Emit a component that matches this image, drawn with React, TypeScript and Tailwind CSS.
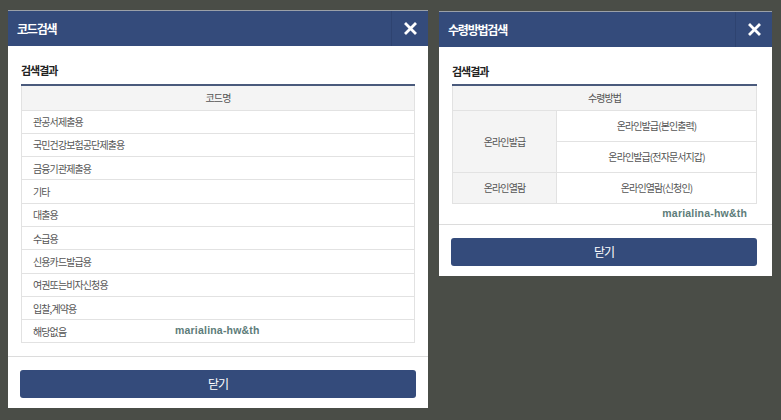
import React from "react";

const codes = [
  "관공서제출용",
  "국민건강보험공단제출용",
  "금융기관제출용",
  "기타",
  "대출용",
  "수급용",
  "신용카드발급용",
  "여권또는비자신청용",
  "입찰,계약용",
  "해당없음",
];

const kr = "font-['Noto_Sans_CJK_KR','Noto_Sans',sans-serif]";

const CloseIcon = () => (
  <svg width="13" height="13" viewBox="0 0 13 13">
    <path d="M2 2 L11 11 M11 2 L2 11" stroke="#fff" strokeWidth="2.8" strokeLinecap="square" />
  </svg>
);

const Header = ({ title }: { title: string }) => (
  <div className="flex h-[36px] items-stretch bg-[#344b7b] border-t border-[#9aa0a8]">
    <div className="flex flex-1 items-center pl-[9px] text-[12px] font-bold tracking-[-1.2px] text-white">{title}</div>
    <div className="flex w-[37px] items-center justify-center border-l border-[#2e4370]">
      <CloseIcon />
    </div>
  </div>
);

const Mark = () => (
  <span className="font-['Liberation_Sans',sans-serif] text-[10.5px] font-bold tracking-[0.2px] text-[#5d7c79]">marialina-hw&amp;th</span>
);

const CloseButton = () => (
  <button className="flex h-[28px] w-full items-center justify-center rounded-[3px] bg-[#344b7b] text-[12px] tracking-[-1px] text-white">
    닫기
  </button>
);

export default function App() {
  return (
    <div className={`flex h-[420px] w-[781px] items-start gap-[11px] bg-[#4a4d47] pl-[8px] pt-[10px] ${kr}`}>
      {/* 코드검색 */}
      <div className="flex h-[398px] w-[420px] flex-col bg-white">
        <Header title="코드검색" />
        <div className="px-[13px] pt-[16px]">
          <div className="text-[11px] font-bold tracking-[-1px] text-[#222]">검색결과</div>
          <div className="mt-[5px] border-t-2 border-[#4a5a7c]">
            <div className="border-x border-b border-[#e2e2e2]">
              <div className="flex h-[24px] items-center justify-center bg-[#f4f4f4] text-[10px] tracking-[-0.9px] text-[#555]">코드명</div>
              {codes.map((c, i) => (
                <div key={c} className="flex h-[23.3px] items-center border-t border-[#e2e2e2] pl-[11px] text-[10px] tracking-[-0.9px] text-[#555]">
                  <span className="w-[142px]">{c}</span>
                  {i === codes.length - 1 && <Mark />}
                </div>
              ))}
            </div>
          </div>
        </div>
        <div className="mt-[13px] border-t border-[#dcdcdc] px-[12px] pt-[13px]">
          <CloseButton />
        </div>
      </div>

      {/* 수령방법검색 */}
      <div className="mt-[1px] flex h-[265px] w-[333px] flex-col bg-white">
        <Header title="수령방법검색" />
        <div className="pl-[13px] pr-[15px] pt-[16px]">
          <div className="text-[11px] font-bold tracking-[-1px] text-[#222]">검색결과</div>
          <div className="mt-[4px] border-t-2 border-[#4a5a7c]">
            <div className="border-x border-b border-[#e2e2e2] text-[10px] tracking-[-0.9px] text-[#555]">
              <div className="flex h-[24px] items-center justify-center bg-[#f4f4f4]">수령방법</div>
              <div className="flex border-t border-[#e2e2e2]">
                <div className="flex w-[104px] items-center justify-center border-r border-[#e2e2e2] bg-[#f4f4f4]">온라인발급</div>
                <div className="flex flex-1 flex-col">
                  <div className="flex h-[30px] items-center justify-center">온라인발급(본인출력)</div>
                  <div className="flex h-[31px] items-center justify-center border-t border-[#e2e2e2]">온라인발급(전자문서지갑)</div>
                </div>
              </div>
              <div className="flex h-[31px] border-t border-[#e2e2e2]">
                <div className="flex w-[104px] items-center justify-center border-r border-[#e2e2e2] bg-[#f4f4f4]">온라인열람</div>
                <div className="flex flex-1 items-center justify-center">온라인열람(신청인)</div>
              </div>
            </div>
          </div>
          <div className="flex h-[20px] items-center justify-end pr-[10px]">
            <Mark />
          </div>
        </div>
        <div className="border-t border-[#dcdcdc] pl-[12px] pr-[15px] pt-[13px]">
          <CloseButton />
        </div>
      </div>
    </div>
  );
}
